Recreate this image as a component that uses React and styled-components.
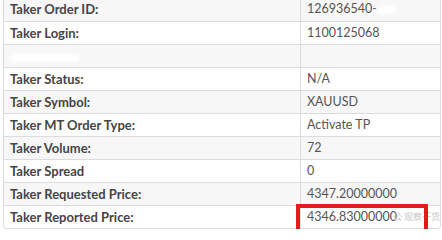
import React from 'react'
import styled, { createGlobalStyle } from 'styled-components'

const GlobalStyle = createGlobalStyle`
  body {
    margin: 0;
    background: #fff;
    font-family: Lato, "Open Sans", sans-serif;
  }
`

const rows = [
  { label: 'Taker Order ID:', value: '126936540-' },
  { label: 'Taker Login:', value: '1100125068' },
  { label: '', value: '', blurred: true },
  { label: 'Taker Status:', value: 'N/A' },
  { label: 'Taker Symbol:', value: 'XAUUSD' },
  { label: 'Taker MT Order Type:', value: 'Activate TP' },
  { label: 'Taker Volume:', value: '72' },
  { label: 'Taker Spread', value: '0' },
  { label: 'Taker Requested Price:', value: '4347.20000000' },
  { label: 'Taker Reported Price:', value: '4346.83000000', marked: true },
]

const Page = styled.div`
  padding: 0 1px 0 3px;
  margin-top: -2px;
`

const Table = styled.div`
  border: 1px solid #dcdcdc;
  border-top: none;
  border-radius: 0 0 4px 4px;
`

const Row = styled.div`
  box-sizing: border-box;
  display: grid;
  grid-template-columns: 296px 1fr;
  height: 23px;
  background: ${p => (p.$striped ? '#f7f7f7' : '#fff')};
  & + & {
    border-top: 1px solid #dcdcdc;
  }
  &:last-child {
    border-radius: 0 0 4px 4px;
  }
`

const Label = styled.div`
  padding-left: 6px;
  font-size: 13px;
  font-weight: 700;
  color: #454545;
  line-height: 22px;
  white-space: nowrap;
`

const Value = styled.div`
  position: relative;
  border-left: 1px solid #dcdcdc;
  padding-left: 6px;
  font-size: 12.5px;
  color: #555;
  line-height: 22px;
  white-space: nowrap;
`

const Smudge = styled.span`
  display: inline-block;
  width: ${p => p.$w}px;
  height: 8px;
  vertical-align: middle;
  background: #fff;
  border-radius: 4px;
  filter: blur(2px);
`

const Watermark = styled.span`
  position: absolute;
  left: 92px;
  top: 0;
  font-size: 9px;
  color: #c8c8c8;
  font-family: "Noto Sans CJK SC", sans-serif;
`

const Marker = styled.div`
  position: absolute;
  left: -5px;
  top: -2px;
  width: 124px;
  height: 34px;
  border: 4px solid #e21b1b;
  pointer-events: none;
`

const App = () => (
  <>
    <GlobalStyle />
    <Page>
      <Table>
        {rows.map((r, i) => (
          <Row key={i} $striped={i % 2 === 0}>
            <Label>{r.blurred ? <Smudge $w={70} /> : r.label}</Label>
            <Value>
              {r.value}
              {i === 0 && <Smudge $w={20} />}
              {r.marked && (
                <>
                  <Watermark>公 观察干货</Watermark>
                  <Marker />
                </>
              )}
            </Value>
          </Row>
        ))}
      </Table>
    </Page>
  </>
)

export default App
